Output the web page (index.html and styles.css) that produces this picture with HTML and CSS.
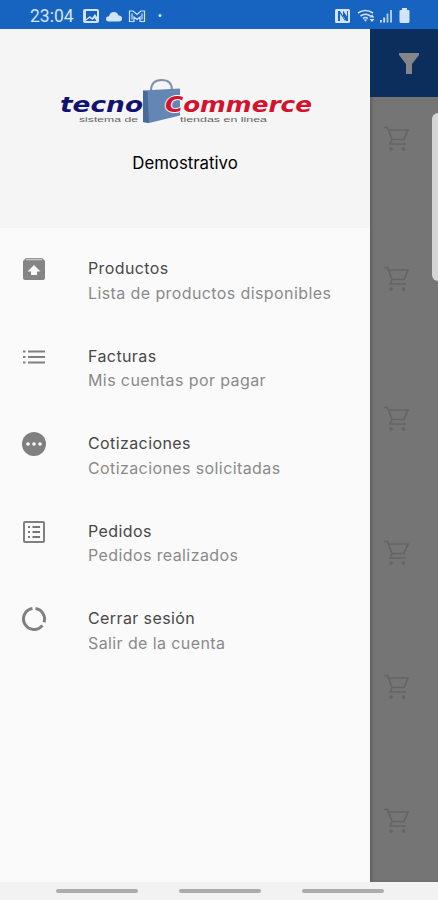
FILE: index.html
```html
<!DOCTYPE html>
<html lang="es">
<head>
    <meta charset="UTF-8">
    <meta name="viewport" content="width=device-width, initial-scale=1.0">
    <title>tecnoCommerce</title>
    <link rel="stylesheet" href="styles.css">
</head>
<body>
    <svg class="defs" width="0" height="0">
        <symbol id="cart" viewBox="0 0 25 26">
            <path d="M0 1.500h3.500L8 13.500h12l4-9.500H5M8 13.500L6 18h16" fill="none" stroke="currentColor" stroke-width="1.700"/>
            <circle cx="7" cy="23" r="1.800" fill="currentColor"/>
            <circle cx="19.500" cy="23" r="1.800" fill="currentColor"/>
        </symbol>
    </svg>

    <div class="phone">
        <header class="status-bar">
            <span class="clock">23:04</span>
            <svg class="status-left" width="82" height="16" viewBox="0 0 82 16" fill="currentColor">
                <path fill-rule="evenodd" d="M2 1h12q2 0 2 2v10q0 2-2 2H2q-2 0-2-2V3q0-2 2-2zM3 3v8l4-3 2 2 3-4 2 3V3zM2.500 13h11l-2-3-2 2-3-2z"/>
                <path d="M26 13.500q-3 0-3-2.500 0-2.500 3-2.700Q27 4 31 4q3.500 0 4.500 3.500 3.500 0 3.500 3t-3 3z"/>
                <path d="M46.500 3h3.500l4 3.500L58 3h3.500v10.500H57V9l-3 2.500L51 9v4.500h-4.500zM49 5.500v6M59 5.500v6" fill="none" stroke="currentColor" stroke-width="1.200"/>
                <circle cx="77" cy="7.500" r="1.500"/>
            </svg>
            <svg class="status-right" width="76" height="18" viewBox="0 0 76 18" fill="currentColor">
                <path fill-rule="evenodd" d="M1.500 2h12q1.500 0 1.500 1.500v11q0 1.500-1.500 1.500h-12Q0 16 0 14.500v-11Q0 2 1.500 2zM3 4v10h2V6.500l5 7.500V12L5 4zM8 3.500l4 6V4h1v10h-2L8 9.500z"/>
                <path d="M23 6q7.500-5 15 0M25.500 9q5-3.500 10 0M28 11.500q2.500-2 5 0" fill="none" stroke="currentColor" stroke-width="1.600"/>
                <path d="M30.500 14.500l-2-2h4zM37 7.500l2.500 3h-5zM37 15l-2.500-3h5z"/>
                <path d="M45 13h1.800v2.500H45zM48.300 10.500h1.800v5h-1.800z"/>
                <path d="M51.600 6.500h1.800v9h-1.800zM55 3h2v12.500h-2z" opacity=".8"/>
                <path d="M67 1h5v2h1.500q1 0 1 1v10.500q0 1.500-1.500 1.500h-7q-1.500 0-1.500-1.500V4q0-1 1-1H67z"/>
            </svg>
        </header>

        <div class="screen">
            <aside class="drawer">
                <div class="drawer-header">
                    <svg class="logo" width="256" height="48" viewBox="0 0 256 48">
                        <path d="M92 12q0-11 10.500-11T113 11" fill="none" stroke="#7d92ad" stroke-width="2"/>
                        <path d="M84 11.500l37-2v27L90 44l-6-1z" fill="#6486b3"/>
                        <path d="M84 11.500l4.500 1L90 44l-6-1z" fill="#486a98"/>
                        <g class="logo-name">
                            <text x="1" y="33" textLength="83" lengthAdjust="spacingAndGlyphs" fill="#12126f">tecno</text>
                            <text x="106" y="33" textLength="147" lengthAdjust="spacingAndGlyphs" fill="#d3122d" stroke="#f5f5f5" stroke-width="2" paint-order="stroke">Commerce</text>
                        </g>
                        <g class="logo-tagline">
                            <text x="20" y="42.500" textLength="59" lengthAdjust="spacingAndGlyphs">sistema de</text>
                            <text x="121" y="42.500" textLength="87" lengthAdjust="spacingAndGlyphs">tiendas en linea</text>
                        </g>
                    </svg>
                    <div class="account">Demostrativo</div>
                </div>

                <nav class="menu">
                    <a class="menu-item">
                        <svg width="24" height="24" viewBox="0 0 24 24">
                            <path d="M4 1h16l3 3v17q0 2-2 2H3q-2 0-2-2V4z" fill="#858585"/>
                            <path d="M4 2.500h16" stroke="#c8c8c8" stroke-width="1.500"/>
                            <path d="M12 8l6.500 6.500H15V18H9v-3.500H5.500z" fill="#fafafa"/>
                        </svg>
                        <div>
                            <div class="title">Productos</div>
                            <div class="subtitle">Lista de productos disponibles</div>
                        </div>
                    </a>
                    <a class="menu-item">
                        <svg width="24" height="24" viewBox="0 0 24 24" fill="#808080">
                            <path d="M1 5.500h2.500v2H1zM1 11h2.500v2H1zM1 16.500h2.500v2H1zM6 5.500h17v2H6zM6 11h17v2H6zM6 16.500h17v2H6z"/>
                        </svg>
                        <div>
                            <div class="title">Facturas</div>
                            <div class="subtitle">Mis cuentas por pagar</div>
                        </div>
                    </a>
                    <a class="menu-item">
                        <svg width="24" height="24" viewBox="0 0 24 24">
                            <circle cx="12" cy="12" r="12" fill="#808080"/>
                            <g fill="#fafafa">
                                <circle cx="6" cy="12" r="1.800"/>
                                <circle cx="12" cy="12" r="1.800"/>
                                <circle cx="18" cy="12" r="1.800"/>
                            </g>
                        </svg>
                        <div>
                            <div class="title">Cotizaciones</div>
                            <div class="subtitle">Cotizaciones solicitadas</div>
                        </div>
                    </a>
                    <a class="menu-item">
                        <svg width="24" height="24" viewBox="0 0 24 24" fill="#777">
                            <rect x="2" y="2" width="20" height="20" rx="1" fill="none" stroke="#808080" stroke-width="2"/>
                            <path d="M6 6h2v2H6zM6 11h2v2H6zM6 16h2v2H6zM10.500 6H18v2h-7.500zM10.500 11H18v2h-7.500zM10.500 16H18v2h-7.500z"/>
                        </svg>
                        <div>
                            <div class="title">Pedidos</div>
                            <div class="subtitle">Pedidos realizados</div>
                        </div>
                    </a>
                    <a class="menu-item">
                        <svg width="24" height="24" viewBox="0 0 24 24" fill="none" stroke="#808080" stroke-width="3">
                            <path d="M13.500 1.600A10.500 10.500 0 0 1 22 15.300M20.400 18.300A10.500 10.500 0 1 1 10.500 1.600"/>
                        </svg>
                        <div>
                            <div class="title">Cerrar sesión</div>
                            <div class="subtitle">Salir de la cuenta</div>
                        </div>
                    </a>
                </nav>
            </aside>

            <main class="page">
                <div class="app-bar">
                    <svg width="20" height="21" viewBox="0 0 20 21">
                        <path d="M0 0h20v2l-7 9v10H7V11L0 2z" fill="#85868a"/>
                    </svg>
                </div>
                <div class="products">
                    <div class="product tall"><svg class="cart"><use href="#cart"/></svg></div>
                    <div class="product tall"><svg class="cart"><use href="#cart"/></svg></div>
                    <div class="product"><svg class="cart"><use href="#cart"/></svg></div>
                    <div class="product"><svg class="cart"><use href="#cart"/></svg></div>
                    <div class="product"><svg class="cart"><use href="#cart"/></svg></div>
                    <div class="product"><svg class="cart"><use href="#cart"/></svg></div>
                </div>
                <div class="edge-handle"></div>
            </main>
        </div>

        <footer class="nav-bar">
            <span></span>
            <span></span>
            <span></span>
        </footer>
    </div>
</body>
</html>
```
FILE: styles.css
```css
* {
    box-sizing: border-box;
}

body {
    margin: 0;
    font-family: Inter, Roboto, sans-serif;
    background-color: #f2f2f2;
}

.defs {
    position: absolute;
}

.phone {
    display: flex;
    flex-direction: column;
    width: 438px;
    height: 900px;
    overflow: hidden;
}

.status-bar {
    display: flex;
    align-items: center;
    height: 29px;
    padding: 2px 27px 0 30px;
    background-color: #1764c0;
    color: #d3e4fa;
}

.clock {
    width: 53px;
    font-family: Roboto, sans-serif;
    font-size: 17.5px;
}

.status-right {
    margin-left: auto;
}

.screen {
    display: flex;
    height: 853px;
}

.drawer {
    width: 370px;
    background-color: #fafafa;
}

.drawer-header {
    display: flex;
    flex-direction: column;
    align-items: center;
    height: 199px;
    padding-top: 50px;
    background-color: #f5f5f5;
}

.logo {
    display: block;
    margin-left: 3px;
}

.logo-name {
    font-family: "DejaVu Sans", sans-serif;
    font-size: 22px;
    font-style: italic;
    font-weight: bold;
}

.logo-tagline {
    font-family: "Liberation Sans", sans-serif;
    font-size: 7.5px;
    fill: #666;
}

.account {
    margin-top: 26px;
    font-size: 16.8px;
    line-height: 20px;
    color: #000;
}

.menu {
    padding-top: 28px;
}

.menu-item {
    display: flex;
    height: 87.6px;
    padding-left: 22px;
}

.menu-item svg {
    margin: 1px 42px 0 0;
}

.title,
.subtitle {
    font-size: 16px;
    line-height: 24.5px;
    letter-spacing: 0.4px;
    white-space: nowrap;
}

.title {
    color: #484848;
}

.subtitle {
    color: #8a8a8a;
}

.page {
    position: relative;
    flex: 1;
    background-color: #757575;
    box-shadow: inset 3px 0 3px -1px #606060;
}

.app-bar {
    display: flex;
    align-items: center;
    justify-content: flex-end;
    height: 68px;
    padding-right: 19px;
    background-color: #0c2e5c;
}

.products {
    padding: 29px 0 0 14px;
}

.product {
    height: 134px;
}

.product.tall {
    height: 140px;
}

.cart {
    display: block;
    width: 25px;
    height: 26px;
    color: #646464;
}

.edge-handle {
    position: absolute;
    top: 84px;
    right: 0;
    width: 6px;
    height: 168px;
    border-radius: 6px 0 0 6px;
    background-color: #d5d5d5;
}

.nav-bar {
    display: flex;
    flex: 1;
    gap: 41px;
    padding: 7px 0 0 56px;
    background-color: #f2f2f2;
}

.nav-bar span {
    width: 82px;
    height: 4px;
    border-radius: 2px;
    background-color: #adadad;
}
```
